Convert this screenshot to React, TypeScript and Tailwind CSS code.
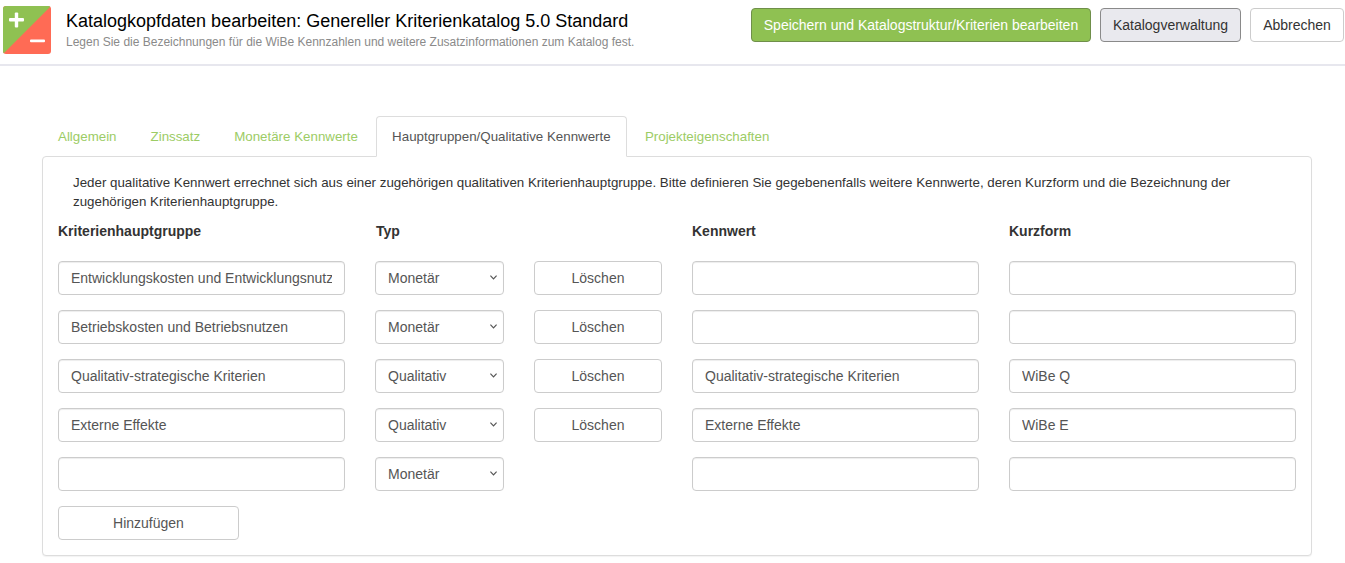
import React from "react";

const inputCls = "w-full h-[34px] rounded-[4px] border border-[#cccccc] bg-white px-3 text-[14px] text-[#555555] outline-none shadow-[inset_0_1px_1px_rgba(0,0,0,0.075)]";
const selectCls = "w-full h-[34px] appearance-none rounded-[4px] border border-[#cccccc] bg-white pl-3 pr-5 text-[14px] text-[#555555] outline-none shadow-[inset_0_1px_1px_rgba(0,0,0,0.075)]";
const btnCls = "w-full h-[34px] rounded-[4px] border border-[#cccccc] bg-white text-[14px] text-[#555555]";
const headCls = "text-[14px] font-bold leading-[20px] text-[#333333]";

const rows = [
  { g: "Entwicklungskosten und Entwicklungsnutzen", t: "Monetär", k: "", f: "", del: true },
  { g: "Betriebskosten und Betriebsnutzen", t: "Monetär", k: "", f: "", del: true },
  { g: "Qualitativ-strategische Kriterien", t: "Qualitativ", k: "Qualitativ-strategische Kriterien", f: "WiBe Q", del: true },
  { g: "Externe Effekte", t: "Qualitativ", k: "Externe Effekte", f: "WiBe E", del: true },
  { g: "", t: "Monetär", k: "", f: "", del: false },
];

const tabs = ["Allgemein", "Zinssatz", "Monetäre Kennwerte", "Hauptgruppen/Qualitative Kennwerte", "Projekteigenschaften"];

function Logo() {
  return (
    <svg width="48" height="48" viewBox="0 0 48 48" className="shrink-0">
      <defs>
        <clipPath id="logoClip"><rect width="48" height="48" rx="3" /></clipPath>
      </defs>
      <g clipPath="url(#logoClip)">
        <rect width="48" height="48" fill="#ff6b55" />
        <polygon points="0,0 48,0 0,48" fill="#8fc152" />
      </g>
      <rect x="6" y="12" width="15" height="3.4" rx="1" fill="#fff" />
      <rect x="11.8" y="6.5" width="3.4" height="15" rx="1" fill="#fff" />
      <rect x="27" y="33.4" width="15" height="2.8" rx="1" fill="#fff" />
    </svg>
  );
}

function Select({ value }: { value: string }) {
  return (
    <div className="relative">
      <select className={selectCls} defaultValue={value}>
        <option>Monetär</option>
        <option>Qualitativ</option>
      </select>
      <svg width="7" height="5" viewBox="0 0 7 5" className="absolute right-[7px] top-[14px] pointer-events-none">
        <path d="M0.4 0.6 L3.5 3.8 L6.6 0.6" fill="none" stroke="#555555" strokeWidth="1.2" />
      </svg>
    </div>
  );
}

export default function App() {
  return (
    <div className="min-h-[563px] bg-white font-['Liberation_Sans',Arial,sans-serif] overflow-hidden">
      <header className="h-[66px] border-b-2 border-[#e7e7ee] flex items-start justify-between pl-[3px] pr-[1px]">
        <div className="flex items-start pt-[6px]">
          <Logo />
          <div className="ml-[15px]">
            <h1 className="text-[18px] leading-[20px] mt-[5px] text-black">Katalogkopfdaten bearbeiten: Genereller Kriterienkatalog 5.0 Standard</h1>
            <p className="text-[12px] leading-[14px] mt-[4px] text-[#8a8a8a]">Legen Sie die Bezeichnungen für die WiBe Kennzahlen und weitere Zusatzinformationen zum Katalog fest.</p>
          </div>
        </div>
        <div className="flex items-center gap-[9px] pt-[8px]">
          <button className="h-[34px] w-[340px] rounded-[4px] border border-[#6f8f4a] bg-[#8fc152] text-[14px] text-white">Speichern und Katalogstruktur/Kriterien bearbeiten</button>
          <button className="h-[34px] w-[141px] rounded-[4px] border border-[#8a8a8a] bg-[#e9e9ee] text-[14px] text-[#333333]">Katalogverwaltung</button>
          <button className="h-[34px] w-[94px] rounded-[4px] border border-[#cccccc] bg-white text-[14px] text-[#333333]">Abbrechen</button>
        </div>
      </header>

      <main className="ml-[42px] w-[1270px] mt-[50px]">
        <nav className="flex -mb-px relative z-10 h-[41px]">
          {tabs.map((t, i) => (
            <div
              key={t}
              className={
                i === 3
                  ? "h-[41px] w-[251px] justify-center mr-[2px] flex items-center rounded-t-[4px] border border-[#dddddd] border-b-white bg-white text-[13.33px] text-[#555555]"
                  : "h-[41px] px-[16px] mr-[2px] flex items-center text-[13.33px] text-[#9ccc65]"
              }
            >
              {t}
            </div>
          ))}
        </nav>
        <section className="h-[400px] rounded-[4px] border border-[#dddddd] bg-white px-[15px] shadow-[0_1px_1px_rgba(0,0,0,0.05)]">
          <p className="pl-[15px] pt-[16px] text-[13.33px] leading-[19px] text-[#333333] w-[1200px]">
            Jeder qualitative Kennwert errechnet sich aus einer zugehörigen qualitativen Kriterienhauptgruppe. Bitte definieren Sie gegebenenfalls weitere Kennwerte, deren Kurzform und die Bezeichnung der zugehörigen Kriterienhauptgruppe.
          </p>
          <div className="grid grid-cols-[287px_129px_128px_287px_287px] gap-x-[30px] gap-y-[15px] mt-[10px]">
            <div className={`${headCls} mb-[5px]`}>Kriterienhauptgruppe</div>
            <div className={`${headCls} col-span-2 pl-[1px]`}>Typ</div>
            <div className={headCls}>Kennwert</div>
            <div className={headCls}>Kurzform</div>
            {rows.map((r, i) => (
              <React.Fragment key={i}>
                <input className={inputCls} defaultValue={r.g} />
                <Select value={r.t} />
                {r.del ? <button className={btnCls}>Löschen</button> : <div />}
                <input className={inputCls} defaultValue={r.k} />
                <input className={inputCls} defaultValue={r.f} />
              </React.Fragment>
            ))}
            <button className="col-start-1 w-[181px] h-[34px] rounded-[4px] border border-[#cccccc] bg-white text-[14px] text-[#555555]">Hinzufügen</button>
          </div>
        </section>
      </main>
    </div>
  );
}
